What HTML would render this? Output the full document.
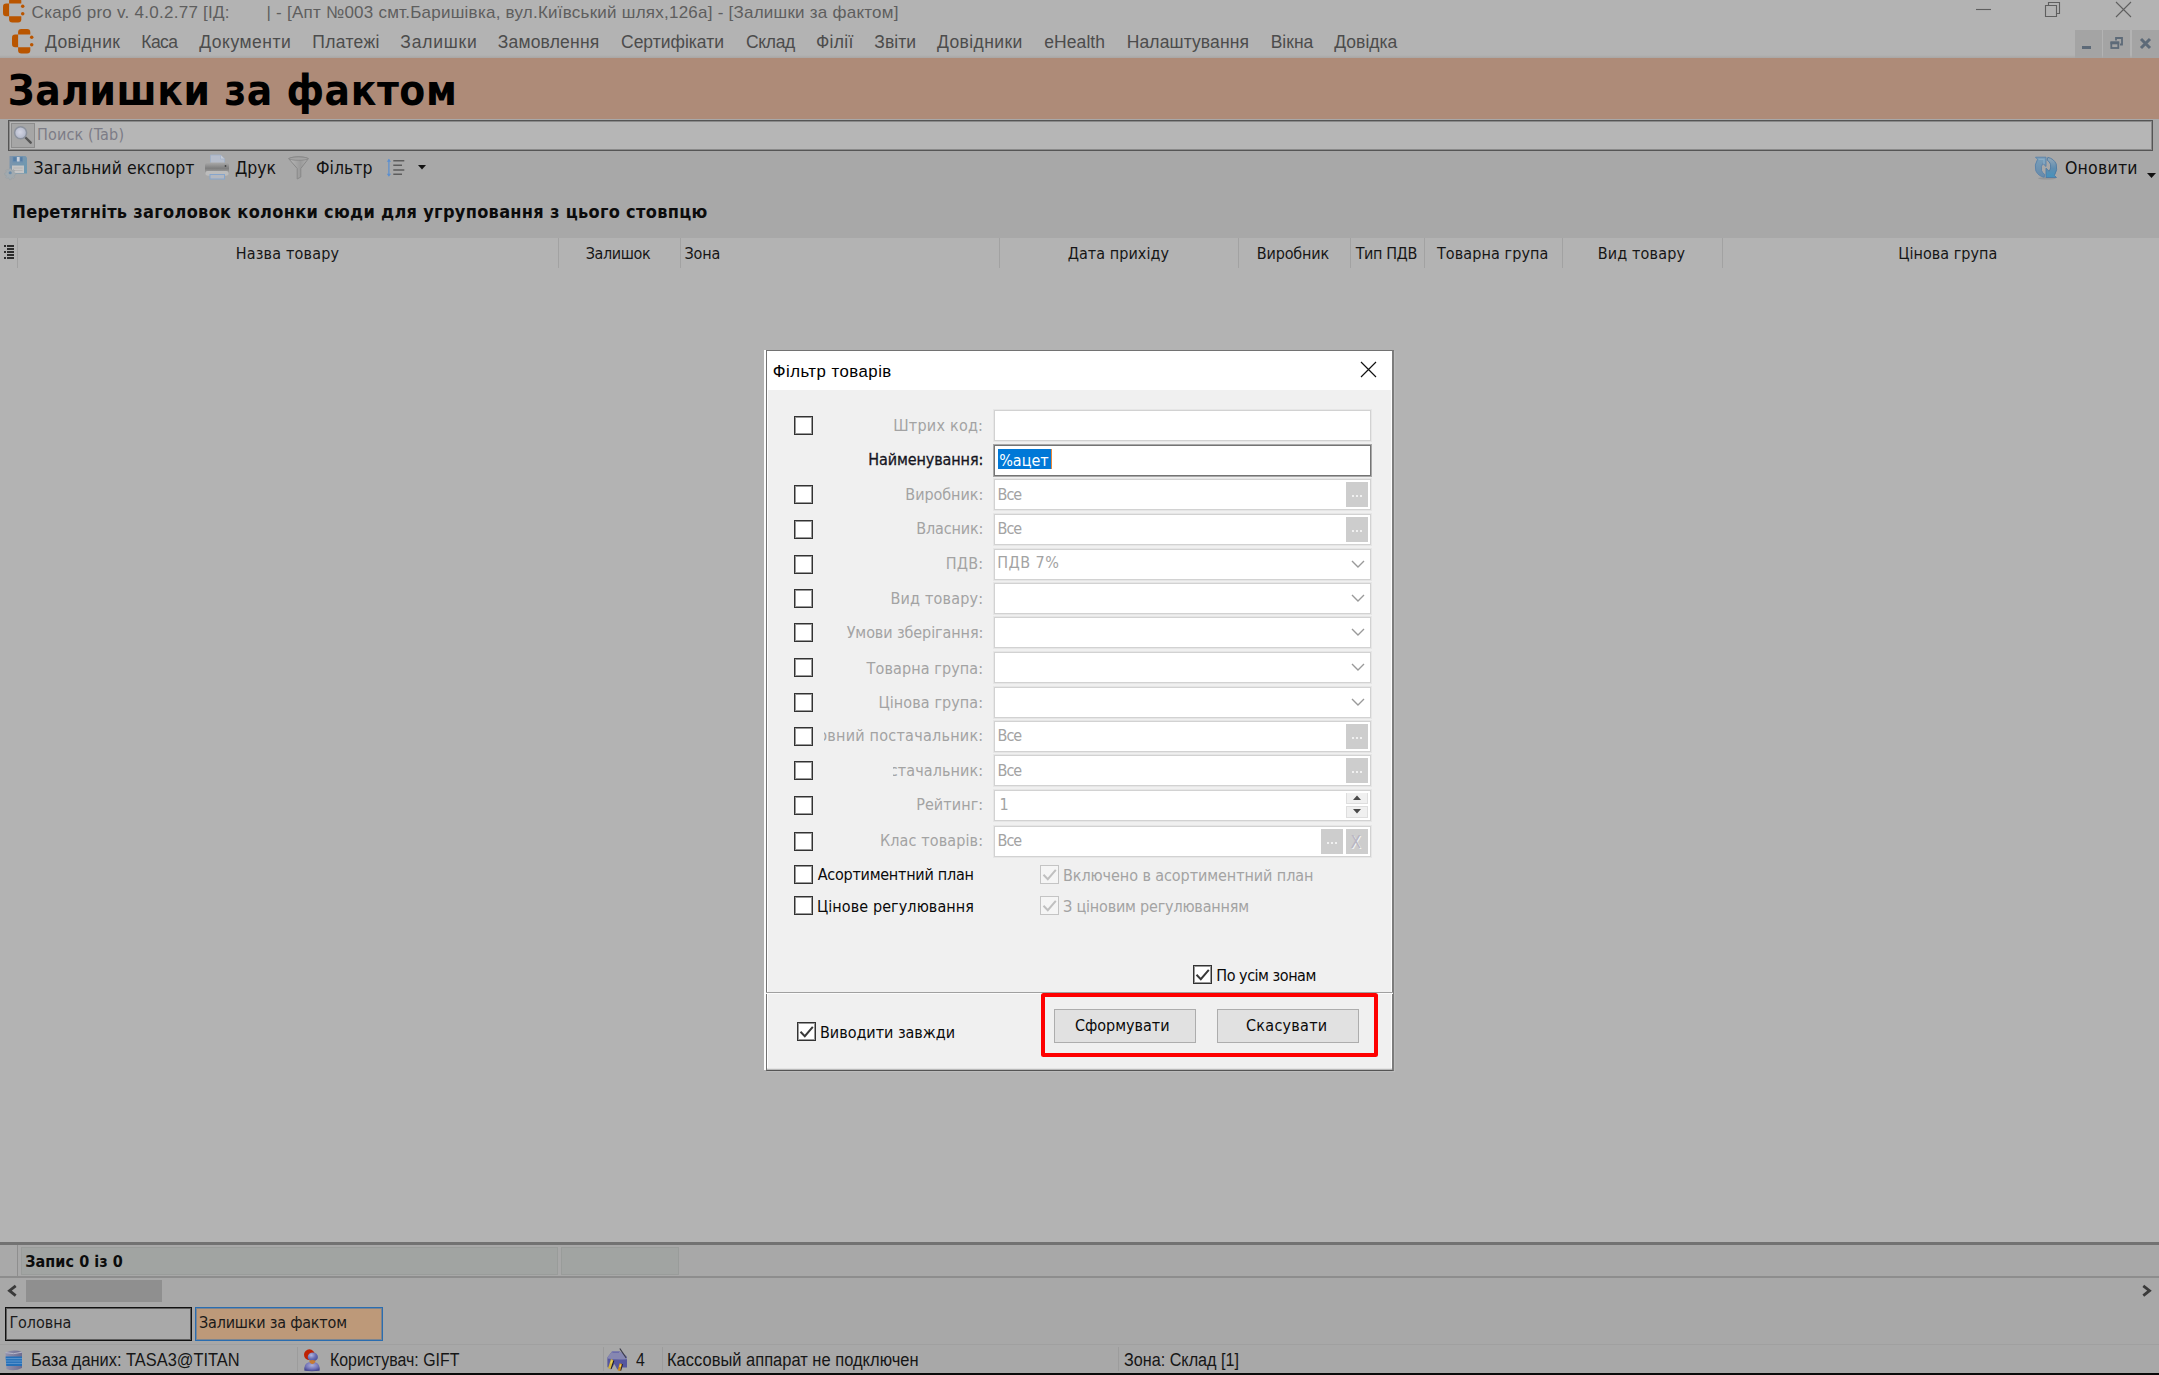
<!DOCTYPE html>
<html lang="uk"><head><meta charset="utf-8"><title>Скарб pro - Залишки за фактом</title>
<style>
html,body{margin:0;padding:0}
body{width:2159px;height:1375px;overflow:hidden;position:relative;background:#b3b3b3;font-family:"DejaVu Sans Condensed","Liberation Sans",sans-serif}
.a{position:absolute;box-sizing:border-box}
.t{position:absolute;white-space:pre;line-height:0;display:block}
svg{position:absolute;overflow:visible}
.tah{font-family:"DejaVu Sans Condensed","Liberation Sans",sans-serif}
.seg{font-family:"Liberation Sans","DejaVu Sans",sans-serif}
.djb{font-family:"DejaVu Sans","Liberation Sans",sans-serif}
.t::before{content:"";display:inline-block;width:0;height:0}

</style></head>
<body>
<div class="a" style="left:0px;top:0px;width:2159px;height:58px;background:#b3b3b3;"></div>
<span class="t seg" id="t0" style="top:13.11px;font-size:17px;color:#5e5e5e;left:31.60px;letter-spacing:0.268px;">Скарб pro v. 4.0.2.77 [ІД:</span>
<span class="t seg" id="t1" style="top:13.11px;font-size:17px;color:#5e5e5e;left:266.50px;letter-spacing:0.238px;">| - [Апт №003 смт.Баришівка, вул.Київський шлях,126а] - [Залишки за фактом]</span>
<svg style="left:1970px;top:0" width="189" height="24" viewBox="0 0 189 24" fill="none" stroke="#5f5f5f" stroke-width="1.1"><path d="M6 9.5H21"/><path d="M75.5 5.5h11v11h-11z"/><path d="M78.5 5.5v-3h11v11h-3"/><path d="M146 2l15 15M161 2l-15 15"/></svg>
<span class="t seg" id="t2" style="top:42.12px;font-size:17.5px;color:#4c4c4c;left:45.00px;letter-spacing:0.388px;">Довідник</span>
<span class="t seg" id="t3" style="top:42.12px;font-size:17.5px;color:#4c4c4c;left:141.30px;letter-spacing:-0.574px;">Каса</span>
<span class="t seg" id="t4" style="top:42.12px;font-size:17.5px;color:#4c4c4c;left:199.30px;letter-spacing:0.499px;">Документи</span>
<span class="t seg" id="t5" style="top:42.12px;font-size:17.5px;color:#4c4c4c;left:312.30px;letter-spacing:0.318px;">Платежі</span>
<span class="t seg" id="t6" style="top:42.12px;font-size:17.5px;color:#4c4c4c;left:400.30px;letter-spacing:0.772px;">Залишки</span>
<span class="t seg" id="t7" style="top:42.12px;font-size:17.5px;color:#4c4c4c;left:497.70px;letter-spacing:0.209px;">Замовлення</span>
<span class="t seg" id="t8" style="top:42.12px;font-size:17.5px;color:#4c4c4c;left:621.00px;">Сертифікати</span>
<span class="t seg" id="t9" style="top:42.12px;font-size:17.5px;color:#4c4c4c;left:746.00px;letter-spacing:-0.339px;">Склад</span>
<span class="t seg" id="t10" style="top:42.12px;font-size:17.5px;color:#4c4c4c;left:816.00px;letter-spacing:0.286px;">Філії</span>
<span class="t seg" id="t11" style="top:42.12px;font-size:17.5px;color:#4c4c4c;left:874.30px;letter-spacing:0.038px;">Звіти</span>
<span class="t seg" id="t12" style="top:42.12px;font-size:17.5px;color:#4c4c4c;left:937.00px;letter-spacing:0.405px;">Довідники</span>
<span class="t seg" id="t13" style="top:42.12px;font-size:17.5px;color:#4c4c4c;left:1044.30px;letter-spacing:0.062px;">eHealth</span>
<span class="t seg" id="t14" style="top:42.12px;font-size:17.5px;color:#4c4c4c;left:1126.70px;letter-spacing:0.121px;">Налаштування</span>
<span class="t seg" id="t15" style="top:42.12px;font-size:17.5px;color:#4c4c4c;left:1270.70px;letter-spacing:-0.006px;">Вікна</span>
<span class="t seg" id="t16" style="top:42.12px;font-size:17.5px;color:#4c4c4c;left:1334.30px;letter-spacing:0.008px;">Довідка</span>
<div class="a" style="left:0px;top:55px;width:2159px;height:3px;background:linear-gradient(#b3b3b3,#a9a6a4)"></div>
<div class="a" style="left:2075px;top:30px;width:27px;height:28px;background:#a4a4a4;"></div>
<div class="a" style="left:2103px;top:30px;width:27px;height:28px;background:#a4a4a4;"></div>
<div class="a" style="left:2132px;top:30px;width:27px;height:28px;background:#a4a4a4;"></div>
<svg style="left:2075px;top:30px" width="84" height="28" viewBox="0 0 84 28"><rect x="7" y="16" width="9" height="3" fill="#5d6a78"/><g fill="none" stroke="#5d6a78" stroke-width="1.800"><path d="M41 10.500v-2.500h6v6.500h-2"/><rect x="36.300" y="12.300" width="7" height="5.700"/><path d="M35.500 13h8.700" stroke-width="2.600"/></g><path d="M66 9l9 9M75 9l-9 9" stroke="#5d6a78" stroke-width="3" fill="none"/></svg>
<div class="a" style="left:0px;top:58px;width:2159px;height:61px;background:#ae8b78;"></div>
<span class="t tah" id="t17" style="top:91.10px;font-size:42px;color:#000;left:7.80px;font-weight:bold;letter-spacing:0.568px;">Залишки за фактом</span>
<div class="a" style="left:0px;top:119px;width:2159px;height:119px;background:#a8a8a8;"></div>
<div class="a" style="left:8px;top:120px;width:2144.5px;height:31px;background:#b6b6b6;border:1px solid #555;box-shadow:inset 0 0 0 1px rgba(85,85,85,.45);"></div>
<div class="a" style="left:10.5px;top:123px;width:24px;height:25px;background:#a6a6a6;border:1px solid #8c8c8c;"></div>
<span class="t tah" id="t18" style="top:135.11px;font-size:16px;color:#7c7c86;left:37.00px;letter-spacing:0.150px;">Поиск (Tab)</span>
<span class="t tah" id="t19" style="top:168.11px;font-size:17.5px;color:#111;left:33.50px;letter-spacing:0.080px;">Загальний експорт</span>
<span class="t tah" id="t20" style="top:168.11px;font-size:17.5px;color:#111;left:235.00px;letter-spacing:-0.047px;">Друк</span>
<span class="t tah" id="t21" style="top:168.11px;font-size:17.5px;color:#111;left:316.00px;letter-spacing:0.009px;">Фільтр</span>
<span class="t tah" id="t22" style="top:168.11px;font-size:17.5px;color:#111;left:2065.00px;letter-spacing:0.211px;">Оновити</span>
<svg style="left:418px;top:165px" width="9" height="6"><path d="M0 0h8l-4 4.500z" fill="#111"/></svg>
<svg style="left:2147px;top:173px" width="10" height="6"><path d="M0 0h9l-4.500 5z" fill="#111"/></svg>
<span class="t tah" id="t23" style="top:212.11px;font-size:18px;color:#0c0c0c;left:12.30px;font-weight:bold;letter-spacing:0.308px;">Перетягніть заголовок колонки сюди для угруповання з цього стовпцю</span>
<div class="a" style="left:0px;top:238px;width:2159px;height:30px;background:#b3b3b3;"></div>
<div class="a" style="left:17px;top:238px;width:1px;height:30px;background:#a2a2a2;"></div>
<div class="a" style="left:558px;top:238px;width:1px;height:30px;background:#a2a2a2;"></div>
<div class="a" style="left:679.5px;top:238px;width:1px;height:30px;background:#a2a2a2;"></div>
<div class="a" style="left:999px;top:238px;width:1px;height:30px;background:#a2a2a2;"></div>
<div class="a" style="left:1237.5px;top:238px;width:1px;height:30px;background:#a2a2a2;"></div>
<div class="a" style="left:1350px;top:238px;width:1px;height:30px;background:#a2a2a2;"></div>
<div class="a" style="left:1424px;top:238px;width:1px;height:30px;background:#a2a2a2;"></div>
<div class="a" style="left:1561.5px;top:238px;width:1px;height:30px;background:#a2a2a2;"></div>
<div class="a" style="left:1721.5px;top:238px;width:1px;height:30px;background:#a2a2a2;"></div>
<span class="t tah" id="t24" style="top:254.11px;font-size:16px;color:#161616;left:235.70px;letter-spacing:0.179px;">Назва товару</span>
<span class="t tah" id="t25" style="top:254.11px;font-size:16px;color:#161616;left:585.70px;letter-spacing:-0.380px;">Залишок</span>
<span class="t tah" id="t26" style="top:254.11px;font-size:16px;color:#161616;left:684.50px;letter-spacing:-0.155px;">Зона</span>
<span class="t tah" id="t27" style="top:254.11px;font-size:16px;color:#161616;left:1067.70px;letter-spacing:0.051px;">Дата прихіду</span>
<span class="t tah" id="t28" style="top:254.11px;font-size:16px;color:#161616;left:1256.70px;letter-spacing:-0.131px;">Виробник</span>
<span class="t tah" id="t29" style="top:254.11px;font-size:16px;color:#161616;left:1355.70px;letter-spacing:-0.413px;">Тип ПДВ</span>
<span class="t tah" id="t30" style="top:254.11px;font-size:16px;color:#161616;left:1437.00px;letter-spacing:0.084px;">Товарна група</span>
<span class="t tah" id="t31" style="top:254.11px;font-size:16px;color:#161616;left:1597.70px;letter-spacing:0.155px;">Вид товару</span>
<span class="t tah" id="t32" style="top:254.11px;font-size:16px;color:#161616;left:1898.30px;letter-spacing:0.024px;">Цінова група</span>
<div class="a" style="left:0px;top:268px;width:2159px;height:975px;background:#b3b3b3;"></div>
<div class="a" style="left:0px;top:1242px;width:2159px;height:3px;background:#727272;"></div>
<div class="a" style="left:0px;top:1245px;width:2159px;height:32px;background:#a8a8a8;"></div>
<div class="a" style="left:0px;top:1245px;width:17px;height:31px;background:#a9a9a9;"></div>
<div class="a" style="left:17px;top:1245px;width:1px;height:31px;background:#8e8e8e;"></div>
<div class="a" style="left:20.5px;top:1247px;width:537.5px;height:28px;background:#a1a4a2;border:1px solid #999c9a"></div>
<div class="a" style="left:561px;top:1247px;width:118px;height:28px;background:#a1a4a2;border:1px solid #999c9a"></div>
<span class="t tah" id="t33" style="top:1262.12px;font-size:16px;color:#0c0c0c;left:25.30px;font-weight:bold;letter-spacing:0.058px;">Запис 0 із 0</span>
<div class="a" style="left:0px;top:1276px;width:2159px;height:2px;background:#8d8d8d;"></div>
<div class="a" style="left:0px;top:1278px;width:2159px;height:27px;background:#a8a8a8;"></div>
<div class="a" style="left:26px;top:1280px;width:136px;height:22px;background:#8f8f8f;"></div>
<svg style="left:7px;top:1284px" width="11" height="13"><path d="M8.700 1.800L2.500 6.700l6.200 4.900" fill="none" stroke="#3a3a3a" stroke-width="2.800"/></svg>
<svg style="left:2141px;top:1284px" width="11" height="13"><path d="M2.300 1.800l6.200 4.900-6.200 4.900" fill="none" stroke="#3a3a3a" stroke-width="2.800"/></svg>
<div class="a" style="left:0px;top:1305px;width:2159px;height:40px;background:#a8a8a8;"></div>
<div class="a" style="left:4.5px;top:1306.5px;width:187.5px;height:34.5px;background:#a9a9a9;border:1px solid #111;box-shadow:inset 0 0 0 1px rgba(17,17,17,.5);"></div>
<span class="t tah" id="t34" style="top:1323.11px;font-size:16px;color:#1a1a1a;left:9.40px;letter-spacing:-0.052px;">Головна</span>
<div class="a" style="left:195px;top:1306.5px;width:187.5px;height:34.5px;background:#bd9979;border:1px solid #2a6db0;box-shadow:inset 0 0 0 1px rgba(42,109,176,.45);"></div>
<span class="t tah" id="t35" style="top:1323.11px;font-size:16px;color:#1a1a1a;left:199.00px;letter-spacing:-0.207px;">Залишки за фактом</span>
<div class="a" style="left:0px;top:1344px;width:2159px;height:1px;background:#a0a0a0;"></div>
<div class="a" style="left:0px;top:1345px;width:2159px;height:28px;background:#a8a8a8;"></div>
<div class="a" style="left:297px;top:1347px;width:1px;height:24px;background:#9c9c9c;"></div>
<div class="a" style="left:603px;top:1347px;width:1px;height:24px;background:#9c9c9c;"></div>
<div class="a" style="left:662px;top:1347px;width:1px;height:24px;background:#9c9c9c;"></div>
<div class="a" style="left:1118px;top:1347px;width:1px;height:24px;background:#9c9c9c;"></div>
<span class="t seg" id="t36" style="top:1360.10px;font-size:18px;color:#161616;left:31.00px;transform:scaleX(0.9104);transform-origin:0 0;">База даних: TASA3@TITAN</span>
<span class="t seg" id="t37" style="top:1360.10px;font-size:18px;color:#161616;left:329.60px;transform:scaleX(0.8841);transform-origin:0 0;">Користувач: GIFT</span>
<span class="t seg" id="t38" style="top:1360.10px;font-size:18px;color:#161616;left:635.50px;transform:scaleX(0.8786);transform-origin:0 0;">4</span>
<span class="t seg" id="t39" style="top:1360.10px;font-size:18px;color:#161616;left:666.70px;transform:scaleX(0.9163);transform-origin:0 0;">Кассовый аппарат не подключен</span>
<span class="t seg" id="t40" style="top:1360.10px;font-size:18px;color:#161616;left:1123.50px;transform:scaleX(0.8988);transform-origin:0 0;">Зона: Склад [1]</span>
<div class="a" style="left:0px;top:1373px;width:2159px;height:2px;background:#0a0a0a;"></div>
<svg style="left:3.1px;top:-2.2px" width="22" height="25" viewBox="0 0 22 25" fill="#b95500"><path d="M6.100 5.600V18.300H3.200Q0 18.300 0 15.100V8.800Q0 5.600 3.200 5.600z"/><path d="M6.100 5.600V3.200Q6.100 0 9.300 0H15.100Q18.300 0 18.300 3.200V5.600z"/><path d="M6.100 18.300H18.300V21.200Q18.300 24.400 15.100 24.400H9.300Q6.100 24.400 6.100 21.200z"/><circle cx="19.700" cy="8.200" r="1.750"/><circle cx="19.700" cy="15.700" r="1.750"/></svg>
<svg style="left:11.8px;top:29.3px" width="22" height="25" viewBox="0 0 22 25" fill="#b95500"><path d="M6.100 5.600V18.300H3.200Q0 18.300 0 15.100V8.800Q0 5.600 3.200 5.600z"/><path d="M6.100 5.600V3.200Q6.100 0 9.300 0H15.100Q18.300 0 18.300 3.200V5.600z"/><path d="M6.100 18.300H18.300V21.200Q18.300 24.400 15.100 24.400H9.300Q6.100 24.400 6.100 21.200z"/><circle cx="19.700" cy="8.200" r="1.750"/><circle cx="19.700" cy="15.700" r="1.750"/></svg>
<svg style="left:11px;top:123px" width="24" height="25" viewBox="0 0 24 25"><defs><radialGradient id="gl" cx="45%" cy="45%" r="60%"><stop offset="0" stop-color="#d2d4e2"/><stop offset="1" stop-color="#aeb4c6"/></radialGradient></defs><path d="M14.500 14.500l5.200 5.200" stroke="#555" stroke-width="2.400" stroke-linecap="round"/><circle cx="9.600" cy="9.700" r="6" fill="url(#gl)" stroke="#8b919c" stroke-width="1.500"/></svg>
<svg style="left:4px;top:155px" width="24" height="24" viewBox="0 0 24 24"><defs><linearGradient id="fl" x1="0" y1="0" x2="1" y2="1"><stop offset="0" stop-color="#8093aa"/><stop offset="1" stop-color="#6a9ab3"/></linearGradient></defs><path d="M5.500 1h16l1.500 1.500V18.500h-17.500z" fill="url(#fl)"/><rect x="8.500" y="1.500" width="10.500" height="6" fill="#6c8fb0"/><rect x="13" y="2" width="2.600" height="4.500" fill="#c9d0da"/><rect x="9.300" y="2.200" width="2.600" height="4" fill="#557da5"/><rect x="16.200" y="2.200" width="2.200" height="4" fill="#557da5"/><rect x="8" y="10.500" width="12" height="7.500" fill="#c4c4c4"/><path d="M9.500 13h9M9.500 15.500h9" stroke="#aeaeae" stroke-width="0.800"/><g transform="translate(6.200 17.700) scale(.82)"><path d="M-1-5.200h2l.4 1.500 1.300.6 1.400-.8 1.400 1.400-.8 1.400.6 1.300 1.500.4v2l-1.500.4-.6 1.300.8 1.400-1.400 1.400-1.400-.8-1.300.6-.4 1.500h-2l-.4-1.500-1.300-.6-1.400.8-1.400-1.400.8-1.400-.6-1.300-1.500-.4v-2l1.500-.4.600-1.300-.8-1.400 1.400-1.400 1.400.8 1.300-.6z" fill="#a2aaaf" stroke="#939ba0" stroke-width="0.500"/><circle r="1.900" fill="#6a8cab"/></g></svg>
<svg style="left:204px;top:154px" width="26" height="26" viewBox="0 0 26 26"><defs><linearGradient id="pr" x1="0" y1="0" x2="0" y2="1"><stop offset="0" stop-color="#a9a9a9"/><stop offset="0.450" stop-color="#7e7e7e"/><stop offset="1" stop-color="#b8b8b8"/></linearGradient></defs><path d="M6.500 1h10l4 4v6h-14z" fill="#b6bdcb" stroke="#9fb0c8" stroke-width="0.800"/><path d="M16.500 1v4h4" fill="#c7ccd6" stroke="#9fb0c8" stroke-width="0.700"/><rect x="1" y="8.500" width="24" height="13" rx="3" fill="url(#pr)"/><rect x="1.500" y="17" width="23" height="4.500" rx="2" fill="#bcbcbc"/><circle cx="21.500" cy="12" r="0.900" fill="#444"/><rect x="6" y="20.500" width="14.500" height="4.500" fill="#b4b8c0" stroke="#86a5cc" stroke-width="1"/></svg>
<svg style="left:287px;top:155px" width="24" height="26" viewBox="0 0 24 26"><defs><linearGradient id="fu" x1="0" y1="0" x2="1" y2="0"><stop offset="0" stop-color="#b9b9b9"/><stop offset="0.600" stop-color="#9a9a9a"/><stop offset="1" stop-color="#b2b2b2"/></linearGradient></defs><path d="M1.500 3.500Q11.500 0 21.500 3.500L13.800 13.500V22l-3.600 2V13.500z" fill="url(#fu)" stroke="#888" stroke-width="1"/><ellipse cx="11.500" cy="3.600" rx="9.300" ry="1.700" fill="#a3a3a3" stroke="#858585" stroke-width="0.800"/></svg>
<svg style="left:385px;top:157px" width="22" height="22" viewBox="0 0 22 22"><path d="M3.900 2.500v16" stroke="#5b8fd0" stroke-width="1.200"/><path d="M1.800 4.800l2.100-3 2.100 3zM1.800 16.700l2.100 3 2.100-3z" fill="#5b8fd0"/><path d="M8.300 3.700h11M8.300 8.300h8.700M8.300 13h11M8.300 17.300h8.700" stroke="#5c5c5c" stroke-width="1.400"/></svg>
<svg style="left:2030px;top:152px" width="32" height="30" viewBox="0 0 32 30"><defs><linearGradient id="rfa" x1="0" y1="0" x2="0" y2="1"><stop offset="0" stop-color="#7a9fba"/><stop offset="1" stop-color="#668aaa"/></linearGradient><linearGradient id="rfb" x1="0" y1="1" x2="0" y2="0"><stop offset="0" stop-color="#95a8b8"/><stop offset="0.550" stop-color="#5f8db0"/><stop offset="1" stop-color="#4592bd"/></linearGradient></defs><ellipse cx="17" cy="26.300" rx="9" ry="1.300" fill="#8d8f92" opacity=".7"/><path id="rar" d="M5.500 5.200H16V14.500L12.800 11.400Q10.600 14.500 11.500 18.400Q12.400 21.200 14.800 22.500L14.200 25.300Q8.400 24.200 5.800 18.800Q4 12.800 7.600 7.300z" fill="url(#rfa)" stroke="#5981a9" stroke-width="0.900" stroke-linejoin="round"/><path d="M5.500 5.200H16V14.500L12.800 11.400Q10.600 14.500 11.500 18.400Q12.400 21.200 14.800 22.500L14.200 25.300Q8.400 24.200 5.800 18.800Q4 12.800 7.600 7.300z" transform="rotate(180 16 15.350)" fill="url(#rfb)" stroke="#4f7aa3" stroke-width="0.900" stroke-linejoin="round"/><path d="M8.500 7.300H14V12" fill="none" stroke="#8db0c8" stroke-width="1.300" opacity=".8"/></svg>
<div class="a" style="left:7px;top:245px;width:7px;height:2px;background:#1e1e1e;opacity:.9;"></div>
<div class="a" style="left:4px;top:245px;width:2px;height:2px;background:#1e1e1e;opacity:.9;"></div>
<div class="a" style="left:7px;top:248px;width:7px;height:2px;background:#1e1e1e;opacity:.9;"></div>
<div class="a" style="left:7px;top:251px;width:7px;height:2px;background:#1e1e1e;opacity:.9;"></div>
<div class="a" style="left:4px;top:251px;width:2px;height:2px;background:#1e1e1e;opacity:.9;"></div>
<div class="a" style="left:7px;top:254px;width:7px;height:2px;background:#1e1e1e;opacity:.9;"></div>
<div class="a" style="left:7px;top:257px;width:7px;height:2px;background:#1e1e1e;opacity:.9;"></div>
<div class="a" style="left:4px;top:257px;width:2px;height:2px;background:#1e1e1e;opacity:.9;"></div>
<svg style="left:4px;top:1350px" width="20" height="21" viewBox="0 0 20 21"><defs><linearGradient id="db" x1="0" y1="0" x2="1" y2="0"><stop offset="0" stop-color="#9393ad"/><stop offset="1" stop-color="#6c6c90"/></linearGradient></defs><path d="M1.500 2.500Q9.500-1 18 2V18Q10 22 2.500 19z" fill="url(#db)"/><path d="M1.600 6.500H18v9.500H2.300z" fill="#2470b8"/><path d="M1.700 8.600H18M1.900 11H18M2.100 13.400H18" stroke="#78a6d6" stroke-width="0.700"/><path d="M1.500 2.600Q9.500 5 18 2.200" stroke="#b6b6c8" stroke-width="1" fill="none"/></svg>
<svg style="left:296px;top:1344px" width="40" height="31" viewBox="0 0 40 31"><defs><radialGradient id="ub" cx="50%" cy="35%" r="65%"><stop offset="0" stop-color="#aeb0d6"/><stop offset="0.600" stop-color="#7576ba"/><stop offset="1" stop-color="#46478e"/></radialGradient><radialGradient id="uh" cx="35%" cy="30%" r="75%"><stop offset="0" stop-color="#b4b8dc"/><stop offset="0.550" stop-color="#6a70b6"/><stop offset="1" stop-color="#4a4f9a"/></radialGradient></defs><circle cx="13.400" cy="10.700" r="5.400" fill="#bf2203"/><path d="M8.400 26.800Q7.600 19.500 13 18.200H19Q24.400 19.500 23.600 26.800Q16 27.600 8.400 26.800z" fill="url(#ub)"/><ellipse cx="16.800" cy="12.900" rx="5.100" ry="4.300" fill="url(#uh)"/><path d="M13.200 16.400Q16.400 15.600 19.500 16.400Q19.200 19.600 16.300 20.100Q13.600 19.600 13.200 16.400z" fill="#c77a33"/></svg>
<svg style="left:600px;top:1344px" width="40" height="31" viewBox="0 0 40 31"><path d="M12.200 7.200H19.400L27 12.400V23.500H21.800L20 26.400L17.200 25.200L14.400 20L11 25.600L7.400 23V13.500z" fill="#55569e"/><path d="M12.200 7.200H19.400L27 12.400V15.200Q17 16 7.400 14.600V13.500z" fill="#8687b1"/><path d="M12.400 8.400H19" stroke="#6a6ba8" stroke-width="1"/><path d="M19.800 4.500L26.200 14" stroke="#3a3a48" stroke-width="1.200"/><path d="M13.600 16.500L10.800 24.800M22.200 20L20.400 26.600" stroke="#1f1d2a" stroke-width="1.600"/><path d="M12.200 15.500L9.300 24.700" stroke="#d5b53a" stroke-width="2.600"/><path d="M20.800 19.600L19 26.700" stroke="#cc8c1c" stroke-width="2.600"/><path d="M12 16.500L11 19.500M20.600 20.500L20 23" stroke="#e2d36a" stroke-width="1.300"/></svg>
<div class="a" style="left:764px;top:350px;width:2px;height:720px;background:#fdfdfd;"></div>
<div class="a" style="left:766px;top:350px;width:628px;height:721px;background:#fff;border:1px solid #727272;border-right:2px solid #7c7c7c;border-bottom-color:#555;box-shadow:1px 1px 1px rgba(255,255,255,.12)"></div>
<div class="a" style="left:768px;top:390px;width:623px;height:680px;background:#f0f0f0;"></div>
<div class="a" style="left:767px;top:1068px;width:625px;height:1px;background:#e4e4e4;"></div>
<div class="a" style="left:767px;top:1069px;width:625px;height:1px;background:#b9b9b9;"></div>
<span class="t seg" id="t41" style="top:372.10px;font-size:16.8px;color:#000;left:772.70px;letter-spacing:0.487px;">Фільтр товарів</span>
<svg style="left:1360px;top:361px" width="17" height="17"><path d="M1 1l15 15M16 1L1 16" stroke="#111" stroke-width="1.200" fill="none"/></svg>
<div class="a" style="left:994px;top:410px;width:377px;height:31px;background:#fff;border:1px solid #d2d2d2;box-shadow:0 0 0 1px #e6e6e6;"></div>
<div class="a" style="left:794px;top:416px;width:19px;height:19px;background:#fff;border:1px solid #333;box-shadow:inset 0 0 0 1px rgba(51,51,51,.5);"></div>
<span class="t tah" id="t42" style="top:426.11px;font-size:16px;color:#a3a3a3;right:1175.80px;letter-spacing:0.236px;">Штрих код:</span>
<div class="a" style="left:994px;top:445px;width:377px;height:31px;background:#fff;border:1px solid #747474;box-shadow:0 0 0 1px rgba(110,110,110,.55);"></div>
<span class="t tah" id="t43" style="top:460.11px;font-size:16px;color:#15151f;right:1175.80px;letter-spacing:-0.108px;-webkit-text-stroke:0.300px #15151f;">Найменування:</span>
<div class="a" style="left:994px;top:479px;width:377px;height:31px;background:#fff;border:1px solid #d2d2d2;box-shadow:0 0 0 1px #e6e6e6;"></div>
<div class="a" style="left:794px;top:485px;width:19px;height:19px;background:#fff;border:1px solid #333;box-shadow:inset 0 0 0 1px rgba(51,51,51,.5);"></div>
<span class="t tah" id="t44" style="top:495.11px;font-size:16px;color:#a3a3a3;right:1175.80px;letter-spacing:-0.057px;">Виробник:</span>
<div class="a" style="left:994px;top:514px;width:377px;height:31px;background:#fff;border:1px solid #d2d2d2;box-shadow:0 0 0 1px #e6e6e6;"></div>
<div class="a" style="left:794px;top:520px;width:19px;height:19px;background:#fff;border:1px solid #333;box-shadow:inset 0 0 0 1px rgba(51,51,51,.5);"></div>
<span class="t tah" id="t45" style="top:529.11px;font-size:16px;color:#a3a3a3;right:1175.80px;letter-spacing:-0.161px;">Власник:</span>
<div class="a" style="left:994px;top:549px;width:377px;height:31px;background:#fff;border:1px solid #d2d2d2;box-shadow:0 0 0 1px #e6e6e6;"></div>
<div class="a" style="left:794px;top:555px;width:19px;height:19px;background:#fff;border:1px solid #333;box-shadow:inset 0 0 0 1px rgba(51,51,51,.5);"></div>
<span class="t tah" id="t46" style="top:564.11px;font-size:16px;color:#a3a3a3;right:1175.80px;letter-spacing:0.162px;">ПДВ:</span>
<div class="a" style="left:994px;top:583px;width:377px;height:31px;background:#fff;border:1px solid #d2d2d2;box-shadow:0 0 0 1px #e6e6e6;"></div>
<div class="a" style="left:794px;top:589px;width:19px;height:19px;background:#fff;border:1px solid #333;box-shadow:inset 0 0 0 1px rgba(51,51,51,.5);"></div>
<span class="t tah" id="t47" style="top:599.11px;font-size:16px;color:#a3a3a3;right:1175.80px;letter-spacing:0.175px;">Вид товару:</span>
<div class="a" style="left:994px;top:617px;width:377px;height:31px;background:#fff;border:1px solid #d2d2d2;box-shadow:0 0 0 1px #e6e6e6;"></div>
<div class="a" style="left:794px;top:623px;width:19px;height:19px;background:#fff;border:1px solid #333;box-shadow:inset 0 0 0 1px rgba(51,51,51,.5);"></div>
<span class="t tah" id="t48" style="top:633.11px;font-size:16px;color:#a3a3a3;right:1175.80px;letter-spacing:-0.093px;">Умови зберігання:</span>
<div class="a" style="left:994px;top:652px;width:377px;height:31px;background:#fff;border:1px solid #d2d2d2;box-shadow:0 0 0 1px #e6e6e6;"></div>
<div class="a" style="left:794px;top:658px;width:19px;height:19px;background:#fff;border:1px solid #333;box-shadow:inset 0 0 0 1px rgba(51,51,51,.5);"></div>
<span class="t tah" id="t49" style="top:669.11px;font-size:16px;color:#a3a3a3;right:1175.80px;letter-spacing:0.103px;">Товарна група:</span>
<div class="a" style="left:994px;top:687px;width:377px;height:31px;background:#fff;border:1px solid #d2d2d2;box-shadow:0 0 0 1px #e6e6e6;"></div>
<div class="a" style="left:794px;top:693px;width:19px;height:19px;background:#fff;border:1px solid #333;box-shadow:inset 0 0 0 1px rgba(51,51,51,.5);"></div>
<span class="t tah" id="t50" style="top:703.11px;font-size:16px;color:#a3a3a3;right:1175.80px;letter-spacing:0.085px;">Цінова група:</span>
<div class="a" style="left:994px;top:721px;width:377px;height:31px;background:#fff;border:1px solid #d2d2d2;box-shadow:0 0 0 1px #e6e6e6;"></div>
<div class="a" style="left:794px;top:727px;width:19px;height:19px;background:#fff;border:1px solid #333;box-shadow:inset 0 0 0 1px rgba(51,51,51,.5);"></div>
<div class="a" style="left:994px;top:755px;width:377px;height:31px;background:#fff;border:1px solid #d2d2d2;box-shadow:0 0 0 1px #e6e6e6;"></div>
<div class="a" style="left:794px;top:761px;width:19px;height:19px;background:#fff;border:1px solid #333;box-shadow:inset 0 0 0 1px rgba(51,51,51,.5);"></div>
<div class="a" style="left:994px;top:790px;width:377px;height:31px;background:#fff;border:1px solid #d2d2d2;box-shadow:0 0 0 1px #e6e6e6;"></div>
<div class="a" style="left:794px;top:796px;width:19px;height:19px;background:#fff;border:1px solid #333;box-shadow:inset 0 0 0 1px rgba(51,51,51,.5);"></div>
<span class="t tah" id="t51" style="top:805.11px;font-size:16px;color:#a3a3a3;right:1175.80px;letter-spacing:0.078px;">Рейтинг:</span>
<div class="a" style="left:994px;top:826px;width:377px;height:31px;background:#fff;border:1px solid #d2d2d2;box-shadow:0 0 0 1px #e6e6e6;"></div>
<div class="a" style="left:794px;top:832px;width:19px;height:19px;background:#fff;border:1px solid #333;box-shadow:inset 0 0 0 1px rgba(51,51,51,.5);"></div>
<span class="t tah" id="t52" style="top:841.11px;font-size:16px;color:#a3a3a3;right:1175.80px;letter-spacing:0.125px;">Клас товарів:</span>
<div class="a" style="left:824px;top:724px;width:160px;height:26px;overflow:hidden">
<span class="t tah" id="t53" style="top:12.11px;font-size:16px;color:#a3a3a3;left:0.00px;left:auto;right:0.600px;letter-spacing:0.240px;">Основний постачальник:</span>
</div>
<div class="a" style="left:893px;top:758px;width:91px;height:26px;overflow:hidden">
<span class="t tah" id="t54" style="top:13.11px;font-size:16px;color:#a3a3a3;left:0.00px;left:auto;right:0.700px;letter-spacing:0.100px;">Постачальник:</span>
</div>
<div class="a" style="left:998px;top:449px;width:53px;height:19.5px;background:#0078d7;"></div>
<div class="a" style="left:1051px;top:449px;width:1px;height:19.5px;background:#e8883a;"></div>
<span class="t tah" id="t55" style="top:461.11px;font-size:16px;color:#fff;left:999.20px;letter-spacing:-0.012px;">%ацет</span>
<span class="t tah" id="t56" style="top:495.11px;font-size:16px;color:#a3a3a3;left:997.60px;letter-spacing:-1.028px;">Все</span>
<span class="t tah" id="t57" style="top:529.11px;font-size:16px;color:#a3a3a3;left:997.60px;letter-spacing:-1.028px;">Все</span>
<span class="t tah" id="t58" style="top:736.11px;font-size:16px;color:#a3a3a3;left:997.60px;letter-spacing:-1.028px;">Все</span>
<span class="t tah" id="t59" style="top:771.11px;font-size:16px;color:#a3a3a3;left:997.60px;letter-spacing:-1.028px;">Все</span>
<span class="t tah" id="t60" style="top:841.11px;font-size:16px;color:#a3a3a3;left:997.60px;letter-spacing:-1.028px;">Все</span>
<span class="t tah" id="t61" style="top:563.11px;font-size:16px;color:#a3a3a3;left:997.30px;letter-spacing:0.448px;">ПДВ 7%</span>
<span class="t tah" id="t62" style="top:805.11px;font-size:16px;color:#a3a3a3;left:999.50px;">1</span>
<div class="a" style="left:1346px;top:482px;width:22px;height:25px;background:#cdcdcd;"></div>
<div class="a" style="left:1352px;top:495px;width:2px;height:2px;background:#f0f0f0;"></div>
<div class="a" style="left:1356px;top:495px;width:2px;height:2px;background:#f0f0f0;"></div>
<div class="a" style="left:1360px;top:495px;width:2px;height:2px;background:#f0f0f0;"></div>
<div class="a" style="left:1346px;top:517px;width:22px;height:25px;background:#cdcdcd;"></div>
<div class="a" style="left:1352px;top:530px;width:2px;height:2px;background:#f0f0f0;"></div>
<div class="a" style="left:1356px;top:530px;width:2px;height:2px;background:#f0f0f0;"></div>
<div class="a" style="left:1360px;top:530px;width:2px;height:2px;background:#f0f0f0;"></div>
<div class="a" style="left:1346px;top:724px;width:22px;height:25px;background:#cdcdcd;"></div>
<div class="a" style="left:1352px;top:737px;width:2px;height:2px;background:#f0f0f0;"></div>
<div class="a" style="left:1356px;top:737px;width:2px;height:2px;background:#f0f0f0;"></div>
<div class="a" style="left:1360px;top:737px;width:2px;height:2px;background:#f0f0f0;"></div>
<div class="a" style="left:1346px;top:758px;width:22px;height:25px;background:#cdcdcd;"></div>
<div class="a" style="left:1352px;top:771px;width:2px;height:2px;background:#f0f0f0;"></div>
<div class="a" style="left:1356px;top:771px;width:2px;height:2px;background:#f0f0f0;"></div>
<div class="a" style="left:1360px;top:771px;width:2px;height:2px;background:#f0f0f0;"></div>
<div class="a" style="left:1321px;top:829px;width:22px;height:25px;background:#cdcdcd;"></div>
<div class="a" style="left:1327px;top:842px;width:2px;height:2px;background:#f0f0f0;"></div>
<div class="a" style="left:1331px;top:842px;width:2px;height:2px;background:#f0f0f0;"></div>
<div class="a" style="left:1335px;top:842px;width:2px;height:2px;background:#f0f0f0;"></div>
<div class="a" style="left:1346px;top:829px;width:22px;height:25px;background:#cdcdcd;"></div>
<span class="t tah" id="t63" style="top:842.11px;font-size:17px;color:#b9b6c2;left:1350.50px;text-shadow:1px 1px 0 #f2f2f2;">X</span>
<svg style="left:1351px;top:560px" width="14" height="9"><path d="M1 1l6 6 6-6" fill="none" stroke="#9a9a9a" stroke-width="1.400"/></svg>
<svg style="left:1351px;top:594px" width="14" height="9"><path d="M1 1l6 6 6-6" fill="none" stroke="#9a9a9a" stroke-width="1.400"/></svg>
<svg style="left:1351px;top:628px" width="14" height="9"><path d="M1 1l6 6 6-6" fill="none" stroke="#9a9a9a" stroke-width="1.400"/></svg>
<svg style="left:1351px;top:663px" width="14" height="9"><path d="M1 1l6 6 6-6" fill="none" stroke="#9a9a9a" stroke-width="1.400"/></svg>
<svg style="left:1351px;top:698px" width="14" height="9"><path d="M1 1l6 6 6-6" fill="none" stroke="#9a9a9a" stroke-width="1.400"/></svg>
<div class="a" style="left:1346px;top:793px;width:22px;height:11px;background:#f0f0f0;border:1px solid #dedede;border-top:none"></div>
<div class="a" style="left:1346px;top:806px;width:22px;height:12px;background:#f0f0f0;border:1px solid #dedede;"></div>
<svg style="left:1353px;top:795px" width="9" height="21"><path d="M0 5h8L4 0.500z M0 14h8l-4 4.500z" fill="#4a4a4a"/></svg>
<div class="a" style="left:794px;top:865px;width:19px;height:19px;background:#fff;border:1px solid #333;box-shadow:inset 0 0 0 1px rgba(51,51,51,.5);"></div>
<span class="t tah" id="t64" style="top:875.11px;font-size:16px;color:#0a0a0a;left:817.70px;letter-spacing:-0.247px;">Асортиментний план</span>
<div class="a" style="left:794px;top:896px;width:19px;height:19px;background:#fff;border:1px solid #333;box-shadow:inset 0 0 0 1px rgba(51,51,51,.5);"></div>
<span class="t tah" id="t65" style="top:907.11px;font-size:16px;color:#0a0a0a;left:817.00px;letter-spacing:0.088px;">Цінове регулювання</span>
<div class="a" style="left:1040px;top:865px;width:19px;height:19px;background:#f5f5f5;border:1px solid #c4c4c4;"></div>
<svg style="left:1040px;top:865px" width="19" height="19"><path d="M3.500 9.800l4.300 4.400 8-9.400" fill="none" stroke="#c0c0c0" stroke-width="2"/></svg>
<span class="t tah" id="t66" style="top:876.12px;font-size:16px;color:#a3a3a3;left:1063.00px;letter-spacing:-0.074px;">Включено в асортиментний план</span>
<div class="a" style="left:1040px;top:896px;width:19px;height:19px;background:#f5f5f5;border:1px solid #c4c4c4;"></div>
<svg style="left:1040px;top:896px" width="19" height="19"><path d="M3.500 9.800l4.300 4.400 8-9.400" fill="none" stroke="#c0c0c0" stroke-width="2"/></svg>
<span class="t tah" id="t67" style="top:907.11px;font-size:16px;color:#a3a3a3;left:1063.00px;letter-spacing:-0.196px;">З ціновим регулюванням</span>
<div class="a" style="left:1193px;top:965px;width:19px;height:19px;background:#fff;border:1px solid #333;box-shadow:inset 0 0 0 1px rgba(51,51,51,.5);"></div>
<svg style="left:1193px;top:965px" width="19" height="19"><path d="M3.500 9.800l4.300 4.400 8-9.400" fill="none" stroke="#3a3a3a" stroke-width="2"/></svg>
<span class="t tah" id="t68" style="top:976.11px;font-size:16px;color:#0a0a0a;left:1216.30px;letter-spacing:-0.469px;">По усім зонам</span>
<div class="a" style="left:766px;top:992px;width:627px;height:1px;background:#a0a0a0;"></div>
<div class="a" style="left:766px;top:993px;width:627px;height:1px;background:#fbfbfb;"></div>
<div class="a" style="left:797px;top:1022px;width:19px;height:19px;background:#fff;border:1px solid #333;box-shadow:inset 0 0 0 1px rgba(51,51,51,.5);"></div>
<svg style="left:797px;top:1022px" width="19" height="19"><path d="M3.500 9.800l4.300 4.400 8-9.400" fill="none" stroke="#3a3a3a" stroke-width="2"/></svg>
<span class="t tah" id="t69" style="top:1033.11px;font-size:16px;color:#0a0a0a;left:820.00px;letter-spacing:-0.026px;">Виводити завжди</span>
<div class="a" style="left:1054px;top:1009px;width:142px;height:34px;background:#e1e1e1;border:1px solid #adadad;"></div>
<div class="a" style="left:1217px;top:1009px;width:142px;height:34px;background:#e1e1e1;border:1px solid #adadad;"></div>
<span class="t tah" id="t70" style="top:1026.11px;font-size:16px;color:#0a0a0a;left:1075.00px;letter-spacing:-0.024px;">Сформувати</span>
<span class="t tah" id="t71" style="top:1026.11px;font-size:16px;color:#0a0a0a;left:1246.00px;letter-spacing:0.269px;">Скасувати</span>
<div class="a" style="left:1041px;top:993px;width:337px;height:64px;border:4px solid #fe0000;border-radius:2.500px;"></div>
</body></html>
